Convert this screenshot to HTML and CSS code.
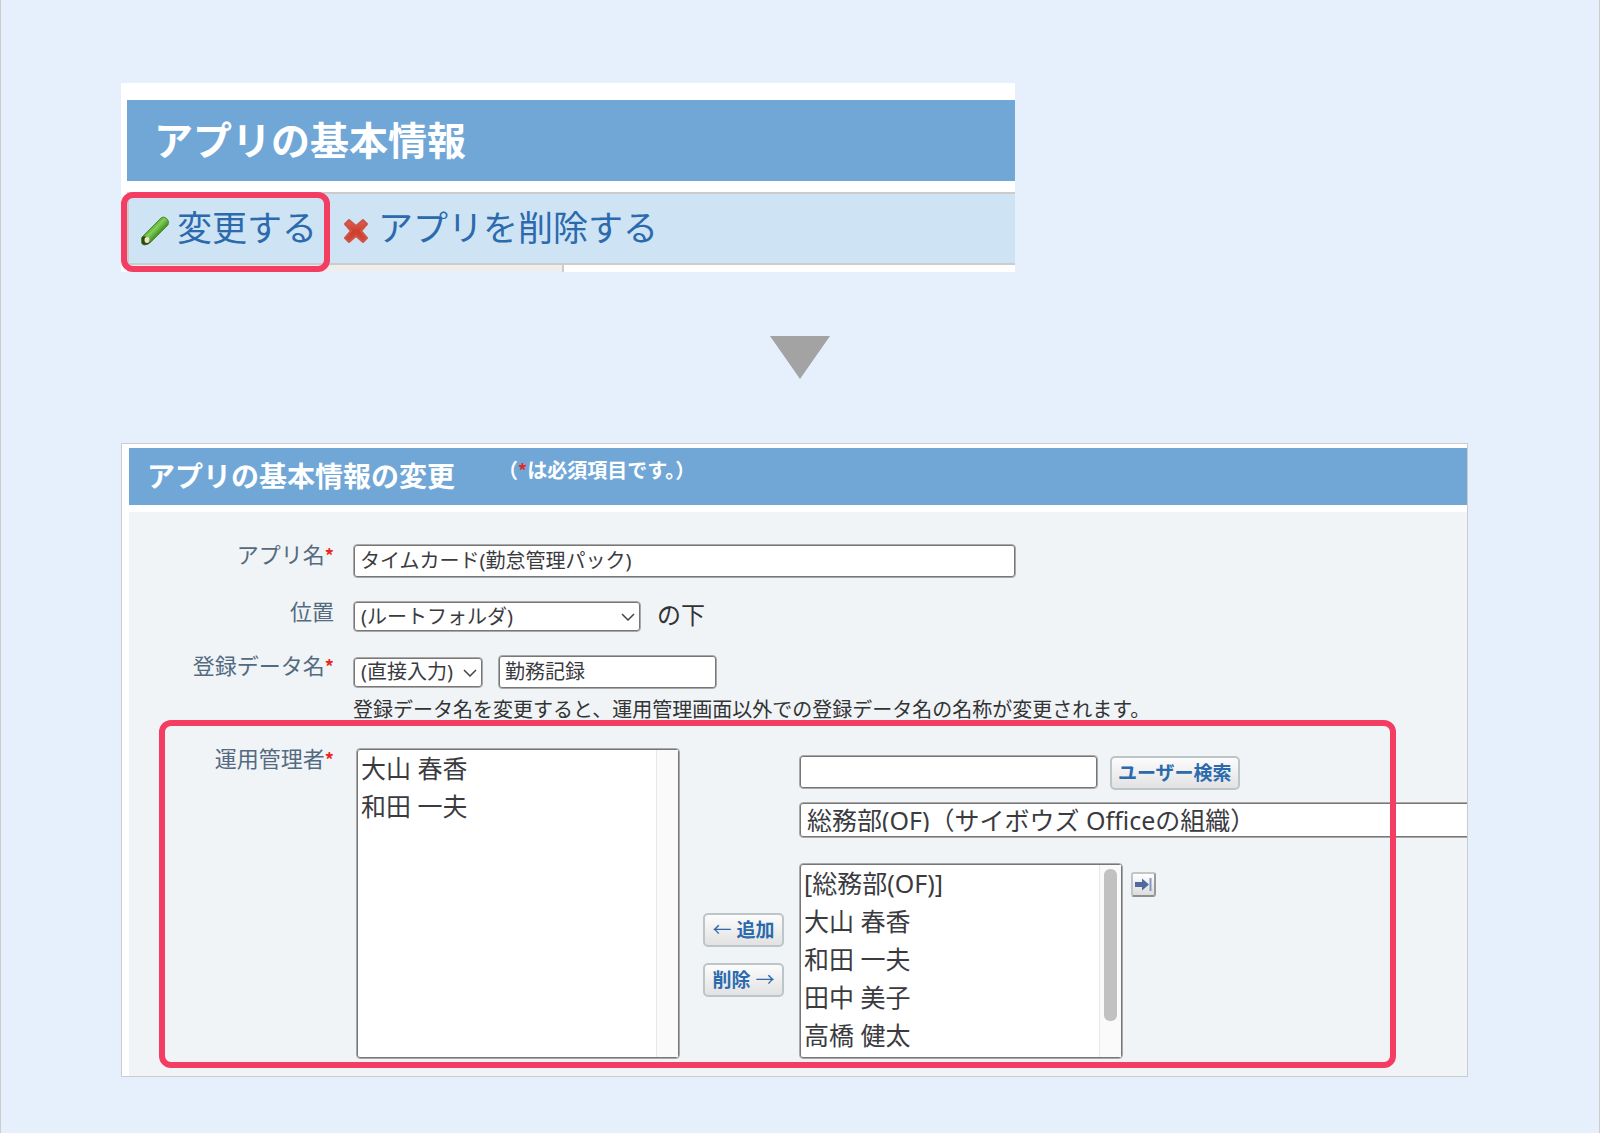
FILE: index.html
```html
<!DOCTYPE html>
<html lang="ja">
<head>
<meta charset="utf-8">
<title>アプリの基本情報の変更</title>
<link rel="stylesheet" href="styles.css">
</head>
<body>
<main class="page">
  <section class="summary">
    <h1 class="summary-title">アプリの基本情報</h1>
    <nav class="toolbar">
      <span class="highlight highlight-edit"></span>
      <a class="tool" href="#edit">
        <svg class="tool-icon" viewBox="0 0 30 30" aria-hidden="true">
          <defs>
            <linearGradient id="pencil" x1="0" y1="0" x2="1" y2="1">
              <stop offset="0.35" stop-color="#4f9f33"/>
              <stop offset="0.46" stop-color="#86cf58"/>
              <stop offset="0.64" stop-color="#3a8a20"/>
            </linearGradient>
          </defs>
          <path d="M1 21 20 2Q22 0 25 2Q29 5 27 9L10 26Q7 29 3 29Q0 28 0 25Z" fill="url(#pencil)" stroke="#4a8f36" stroke-width="1"/>
          <path d="M1 21Q4 19 7 22Q10 25 8 27.500Q5 29.500 2 28.500Q0 27 1 21Z" fill="#2c4a12"/>
          <ellipse cx="6" cy="24" rx="2.500" ry="3" fill="#f0e6bd"/>
        </svg>
        <span>変更する</span>
      </a>
      <a class="tool" href="#delete">
        <svg class="tool-icon delete-icon" viewBox="0 0 28 30" aria-hidden="true">
          <defs>
            <linearGradient id="cross" x1="0" y1="0" x2="0" y2="1">
              <stop offset="0" stop-color="#dc6257"/>
              <stop offset="0.5" stop-color="#cf3f2c"/>
              <stop offset="1" stop-color="#cd4b38"/>
            </linearGradient>
          </defs>
          <path d="M5 4 12 10 19 4 23 8 17 15 23 22 19 26 12 20 5 26 1 22 7 15 1 8Z" fill="url(#cross)" stroke="#d05347" stroke-width="2" stroke-linejoin="round"/>
        </svg>
        <span>アプリを削除する</span>
      </a>
    </nav>
    <div class="summary-next"><span class="summary-next-head"></span></div>
  </section>

  <svg class="step-arrow" viewBox="0 0 60 43" aria-hidden="true"><path d="M0 0H60L30 43Z" fill="#a3a3a3"/></svg>

  <section class="editor">
    <header class="editor-header">
      <h2 class="editor-title">アプリの基本情報の変更</h2>
      <p class="editor-note">（<span class="required">*</span>は必須項目です。）</p>
    </header>
    <form class="form">
      <div class="row">
        <label class="label" for="app-name">アプリ名<span class="required">*</span></label>
        <div class="field"><input class="box text-box wide" id="app-name" type="text" value="タイムカード(勤怠管理パック)"></div>
      </div>
      <div class="row">
        <label class="label" for="folder">位置</label>
        <div class="field">
          <span class="drop folder">
            <select class="box" id="folder"><option>(ルートフォルダ)</option></select>
            <svg class="chevron" viewBox="0 0 14 8" aria-hidden="true"><path d="M1 1 7 7 13 1"/></svg>
          </span>
          <span class="suffix">の下</span>
        </div>
      </div>
      <div class="row">
        <label class="label" for="record-name">登録データ名<span class="required">*</span></label>
        <div class="field">
          <span class="drop entry">
            <select class="box" aria-label="入力方法"><option>(直接入力)</option></select>
            <svg class="chevron" viewBox="0 0 14 8" aria-hidden="true"><path d="M1 1 7 7 13 1"/></svg>
          </span>
          <input class="box text-box record" id="record-name" type="text" value="勤務記録">
        </div>
        <p class="hint">登録データ名を変更すると、運用管理画面以外での登録データ名の名称が変更されます。</p>
      </div>
      <div class="row admins">
        <label class="label" for="admins">運用管理者<span class="required">*</span></label>
        <div class="picker">
          <div class="list-wrap chosen">
            <select class="box list" id="admins" multiple size="7">
              <option>大山 春香</option>
              <option>和田 一夫</option>
            </select>
            <span class="track"></span>
          </div>
          <div class="moves">
            <button class="button" type="button"><span class="arrow">←</span> 追加</button>
            <button class="button" type="button">削除 <span class="arrow">→</span></button>
          </div>
          <div class="source">
            <div class="search">
              <input class="box text-box query" type="text" aria-label="ユーザー名">
              <button class="button" type="button">ユーザー検索</button>
            </div>
            <select class="box group" aria-label="組織"><option>総務部(OF)（サイボウズ Officeの組織）</option></select>
            <div class="members">
              <div class="list-wrap candidates">
                <select class="box list" multiple size="5" aria-label="ユーザー">
                  <option>[総務部(OF)]</option>
                  <option>大山 春香</option>
                  <option>和田 一夫</option>
                  <option>田中 美子</option>
                  <option>高橋 健太</option>
                </select>
                <span class="track"><span class="thumb"></span></span>
              </div>
              <button class="expand" type="button" aria-label="一覧を広げる">
                <svg viewBox="0 0 21 21" aria-hidden="true">
                  <path d="M2 8H9V4.500L16 10.500 9 16.500V13H2Z" fill="#4f6a9e"/>
                  <path d="M17.500 4V17" stroke="#8396bd" stroke-width="2"/>
                </svg>
              </button>
            </div>
          </div>
        </div>
        <span class="highlight highlight-admins"></span>
      </div>
    </form>
  </section>
</main>
</body>
</html>
```

FILE: styles.css
```css
* {
  box-sizing: border-box;
}

body {
  margin: 0;
  background: #e6f0fd;
  color: #333;
  font-family: "Noto Sans", "Noto Sans CJK JP", sans-serif;
  font-size: 20px;
  line-height: 24px;
}

h1,
h2,
p {
  margin: 0;
}

.page {
  min-height: 100vh;
  padding: 83px 131px 56px 120px;
  border: solid #ccc;
  border-width: 0 1px;
}

/* Rounded frame that marks the part to look at */
.highlight {
  position: absolute;
  border: 6px solid #f33d62;
  border-radius: 12px;
  pointer-events: none;
}

.required {
  color: #e8291c;
  font-family: "Noto Sans CJK JP", sans-serif;
  font-size: 18px;
  font-weight: bold;
  line-height: 1;
}

/* App summary */
.summary {
  max-width: 894px;
  padding: 17px 0 0 6px;
  background: #fff;
}

.summary-title {
  padding: 15px 27px 17px;
  background: #71a7d7;
  color: #fff;
  font-size: 39px;
  line-height: 49px;
}

.toolbar {
  position: relative;
  display: flex;
  gap: 27px;
  margin-top: 11px;
  padding: 11px 12px 13px;
  border: 2px solid #ccc;
  border-right: 0;
  background: #cee3f4;
}

.highlight-edit {
  top: -2px;
  left: -8px;
  width: 209px;
  height: 80px;
}

.tool {
  display: flex;
  align-items: center;
  gap: 6px;
  color: #2b6aad;
  font-size: 35px;
  line-height: 45px;
  text-decoration: none;
}

.tool-icon {
  width: 30px;
  height: 30px;
  margin-top: 6px;
}

.delete-icon {
  width: 28px;
}

.summary-next {
  display: flex;
  height: 7px;
}

.summary-next-head {
  width: 437px;
  border-right: 2px solid #ccc;
  background: #eee;
}

.step-arrow {
  display: block;
  width: 60px;
  height: 43px;
  margin: 64px 0 64px 649px;
}

/* Edit form */
.editor {
  padding: 4px 0 0 7px;
  border: 1px solid #ccc;
  background: #fff;
  overflow: hidden;
}

.editor-header {
  display: flex;
  gap: 43px;
  padding: 11px 18px 12px;
  background: #71a7d7;
  color: #fff;
}

.editor-title {
  font-size: 28px;
  line-height: 34px;
}

.editor-note {
  font-weight: bold;
  line-height: 24px;
}

.form {
  display: flex;
  flex-direction: column;
  gap: 23px;
  margin-top: 7px;
  padding: 32px 0 17px;
  background: #f0f4f7;
}

.row {
  display: grid;
  grid-template-columns: 205px 1fr;
  column-gap: 19px;
}

.label {
  color: #546a80;
  font-size: 22px;
  line-height: 21px;
  text-align: right;
}

.field {
  display: flex;
  align-items: center;
}

.hint {
  grid-column: 2;
  margin-top: 9px;
}

.suffix {
  margin: 0 0 4px 16px;
  font-size: 24px;
}

.box {
  display: block;
  width: 100%;
  margin: 0;
  padding: 0 7px;
  border: 1px solid #a9a9a9;
  border-radius: 4px;
  background: #fff;
  box-shadow: inset 0 0 0 1px #777;
  color: #3b3b3f;
  font: inherit;
  outline: 0;
  appearance: none;
}

.text-box {
  height: 34px;
  padding: 0 6px 3px;
}

.wide {
  max-width: 663px;
}

.drop {
  position: relative;
}

.drop .box {
  height: 31px;
}

.folder {
  width: 288px;
}

.entry {
  width: 130px;
}

.record {
  width: 219px;
  margin-left: 15px;
}

.chevron {
  position: absolute;
  top: 12px;
  right: 6px;
  width: 14px;
  height: 8px;
  fill: none;
  stroke: #444;
  stroke-width: 1.5;
  pointer-events: none;
}

/* Administrator picker */
.admins {
  position: relative;
  margin-top: 3px;
}

.highlight-admins {
  top: -28px;
  right: 71px;
  bottom: -9px;
  left: 30px;
}

.picker {
  display: flex;
  align-items: stretch;
  padding-left: 3px;
}

.list-wrap {
  position: relative;
  flex: none;
  width: 324px;
}

.list {
  height: 100%;
  padding: 0 1px;
  font-size: 25px;
  overflow: hidden;
}

.list option {
  min-height: 38px;
  padding: 0 3px 2px;
}

.track {
  position: absolute;
  top: 2px;
  right: 2px;
  bottom: 2px;
  width: 22px;
  padding: 4px;
  border-left: 1px solid #e8e8e8;
  background: #fafafa;
}

.thumb {
  display: block;
  height: 152px;
  border-radius: 6px;
  background: #c1c1c1;
}

.moves {
  display: flex;
  flex: none;
  flex-direction: column;
  gap: 16px;
  width: 81px;
  margin: 165px 15px 0 23px;
}

.button {
  height: 34px;
  padding: 0 6px 1px;
  border: 2px solid #bcc5c8;
  border-radius: 5px;
  background: linear-gradient(#fcfcfc, #e2e2e2);
  color: #2b6aad;
  font: bold 19px/28px "Noto Sans", "Noto Sans CJK JP", sans-serif;
  white-space: nowrap;
}

.moves .button {
  padding: 0 0 1px;
}

.arrow {
  font-family: "Noto Sans CJK JP", sans-serif;
  font-weight: normal;
}

.source {
  flex: 1;
  min-width: 0;
  padding-top: 7px;
}

.search {
  display: flex;
  gap: 12px;
}

.query {
  width: 299px;
}

.search .button {
  margin-top: 1px;
}

/* Runs on past the panel's right edge, where it is clipped */
.group {
  width: calc(100% + 8px);
  height: 36px;
  margin-top: 12px;
  padding-bottom: 1px;
  font-size: 25px;
}

.members {
  display: flex;
  align-items: flex-start;
  gap: 8px;
  margin-top: 25px;
}

.candidates {
  height: 196px;
}

.expand {
  width: 25px;
  height: 25px;
  margin-top: 9px;
  padding: 0;
  border: 2px solid;
  border-color: #c4c4c4 #9a9a9a #8e8e8e #c4c4c4;
  border-radius: 3px;
  background: linear-gradient(#fff, #dcdcdc);
}

.expand svg {
  display: block;
}
```
